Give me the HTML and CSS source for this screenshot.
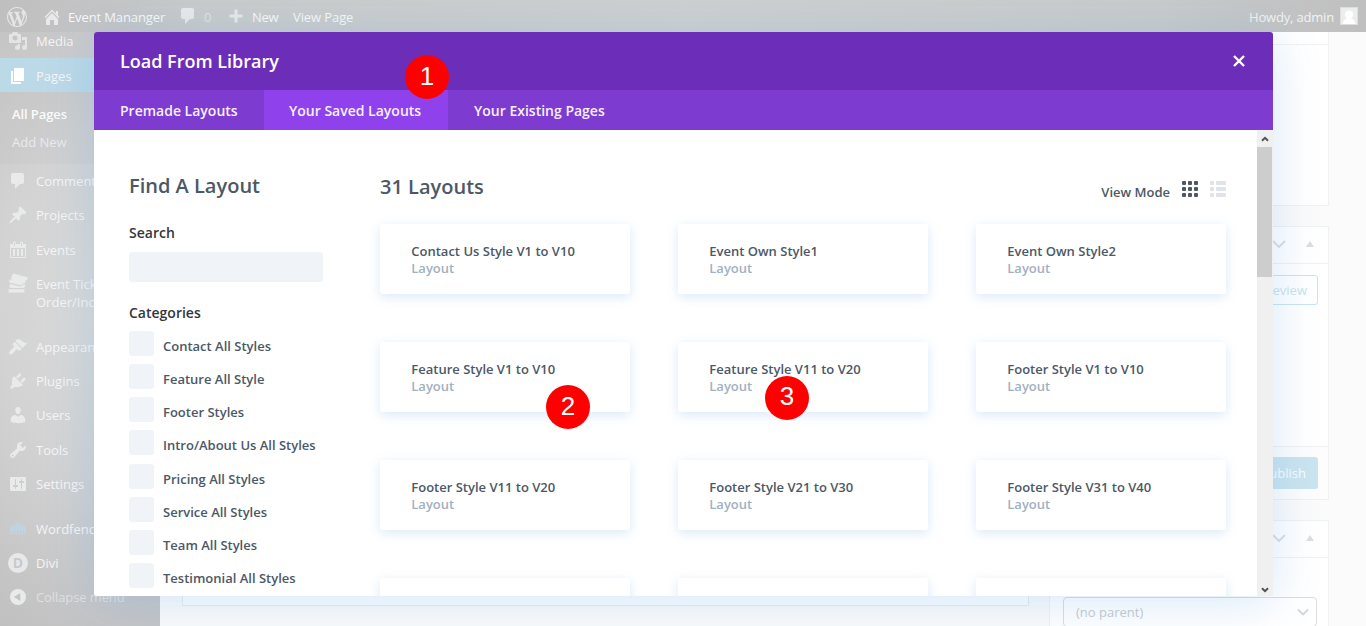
FILE: index.html
```
<!DOCTYPE html>
<html lang="en">
<head>
<meta charset="utf-8">
<title>Load From Library</title>
<link rel="stylesheet" href="styles.css">
</head>
<body>
<div class="screen">
  <header class="adminbar">
    <svg class="ic wp" viewBox="0 0 20 20"><path d="M20 10c0-5.51-4.49-10-10-10C4.48 0 0 4.49 0 10c0 5.52 4.48 10 10 10 5.51 0 10-4.48 10-10zM7.78 15.37L4.37 6.22c.55-.02 1.17-.08 1.17-.08.5-.06.44-1.13-.06-1.11 0 0-1.45.11-2.37.11-.18 0-.37 0-.58-.01C4.12 2.69 6.87 1.11 10 1.11c2.33 0 4.45.87 6.05 2.34-.68-.11-1.65.39-1.65 1.58 0 .74.45 1.36.9 2.1.35.61.55 1.36.55 2.46 0 1.49-1.4 5-1.4 5l-3.03-8.37c.54-.02.82-.17.82-.17.5-.05.44-1.25-.06-1.22 0 0-1.44.12-2.38.12-.87 0-2.33-.12-2.33-.12-.5-.03-.56 1.2-.06 1.22l.92.08 1.26 3.41zM17.41 10c.24-.64.74-1.87.43-4.25.7 1.29 1.05 2.71 1.05 4.25 0 3.29-1.73 6.24-4.4 7.78.97-2.59 1.94-5.2 2.92-7.78zM6.1 18.09C3.12 16.65 1.11 13.53 1.11 10c0-1.3.23-2.48.72-3.59C3.25 10.3 4.67 14.2 6.1 18.09zm4.03-6.63l2.58 6.98c-.86.29-1.76.45-2.71.45-.79 0-1.57-.11-2.29-.33.81-2.38 1.62-4.74 2.42-7.1z"/></svg>
    <svg class="ic home" viewBox="0 0 20 20"><path d="M16 8.5l1.53 1.53-1.06 1.06L10 4.620l-6.470 6.470-1.060-1.060L10 2.500l4 4V4h2v4.500zM10 6.040l6 5.990V18h-4v-5H8v5H4v-5.970z"/></svg>
    <span class="site">Event Mananger</span>
    <svg class="ic bubble" viewBox="0 0 20 20"><path d="M5 2h9c1.100 0 2 .9 2 2v7c0 1.100-.9 2-2 2h-2l-5 5v-5H5c-1.100 0-2-.9-2-2V4c0-1.100.9-2 2-2z"/></svg>
    <span class="count">0</span>
    <svg class="ic plus" viewBox="0 0 20 20"><path d="M8.500 3.500h3v5h5v3h-5v5h-3v-5h-5v-3h5z"/></svg>
    <span class="new">New</span>
    <span class="view">View Page</span>
    <span class="howdy">Howdy, admin</span>
    <svg class="avatar" viewBox="0 0 18 18"><rect class="frame" x=".5" y=".5" width="17" height="17"/><circle cx="9" cy="7.500" r="4"/><path d="M3 17c0-4 3-6 6-6s6 2 6 6z"/></svg>
  </header>

  <div class="body">
    <nav class="side">
      <div class="item media"><svg class="ic" viewBox="0 0 20 20"><path fill-rule="evenodd" d="M13 11V4c0-.55-.45-1-1-1h-1.670L9 1H5L3.670 3H2c-.55 0-1 .45-1 1v7c0 .55.45 1 1 1h10c.55 0 1-.45 1-1zM7 4.500a2.500 2.500 0 1 1 0 5 2.500 2.500 0 0 1 0-5zM14 6h5v10.500a2.500 2.500 0 1 1-2.500-2.500c.17 0 .34.02.5.05V9h-3V6zm-4 8.050V13h2v3.500A2.500 2.500 0 1 1 9.500 14c.17 0 .34.02.5.05z"/></svg><span>Media</span></div>
      <div class="item pages"><svg class="ic" viewBox="0 0 20 20"><path d="M6 15V2h10v13H6zm-1 1h8v2H3V5h2v11z"/></svg><span>Pages</span></div>
      <div class="sub"><span class="on">All Pages</span><span class="add">Add New</span></div>
      <div class="item"><svg class="ic" viewBox="0 0 20 20"><path d="M5 2h9c1.100 0 2 .9 2 2v7c0 1.100-.9 2-2 2h-2l-5 5v-5H5c-1.100 0-2-.9-2-2V4c0-1.100.9-2 2-2z"/></svg><span>Comments</span></div>
      <div class="item"><svg class="ic" viewBox="0 0 20 20"><path d="M10.440 3.020l1.820-1.820 6.360 6.350-1.830 1.820c-1.050-.68-2.480-.57-3.410.36l-.75.75c-.92.93-1.040 2.350-.35 3.410l-1.830 1.820-2.410-2.410-2.800 2.790c-.42.42-3.380 2.710-3.800 2.290s1.860-3.390 2.280-3.810l2.790-2.790L4.100 9.370l1.830-1.830c1.050.69 2.480.57 3.400-.36l.75-.74c.93-.93 1.050-2.360.36-3.420z"/></svg><span>Projects</span></div>
      <div class="item"><svg class="ic" viewBox="0 0 20 20"><path fill-rule="evenodd" d="M15 4h3v14H2V4h3V3c0-.83.67-1.500 1.500-1.500S8 2.170 8 3v1h4V3c0-.83.67-1.500 1.500-1.500S15 2.170 15 3v1zM6 3v2.500c0 .28.22.5.5.5s.5-.22.5-.5V3c0-.28-.22-.5-.5-.5S6 2.720 6 3zm7 0v2.500c0 .28.22.5.5.5s.5-.22.5-.5V3c0-.28-.22-.5-.5-.5s-.5.22-.5.5zm4 14V8H3v9h14zM7 16V9H5v7h2zm4 0V9H9v7h2zm4 0V9h-2v7h2z"/></svg><span>Events</span></div>
      <div class="item two"><svg class="ic" viewBox="0 0 20 20"><path d="M5 .5l15 4-1 2.500-1.500.5v2l-5 2.800L1 9.500l.5-2.500 3-1-1.500-1zM2.500 11l9.500 2.500 5-2.500v3l-2 1H3l-2-1.500zM0 16.200h17l-1 1.200.8 2H0l1-1.500z"/></svg><span>Event Tickets<br>Order/Income</span></div>
      <div class="item gap"><svg class="ic" viewBox="0 0 20 20"><path d="M14.480 11.060L7.410 3.990l1.500-1.500c.5-.56 2.300-.47 3.510.32 1.210.8 1.430 1.280 2.910 2.100 1.180.64 2.450 1.260 4.450.85zm-.71.71L6.700 4.700 4.930 6.470c-.39.39-.39 1.020 0 1.410l1.060 1.060c.39.39.39 1.030 0 1.420-.6.6-1.430 1.110-2.210 1.690-.35.26-.7.53-1.010.84C1.430 14.230.4 16.080 1.400 17.070c.99 1 2.840-.03 4.180-1.360.31-.31.58-.66.85-1.020.57-.78 1.080-1.610 1.690-2.210.39-.39 1.020-.39 1.410 0l1.060 1.060c.39.39 1.020.39 1.410 0z"/></svg><span>Appearance</span></div>
      <div class="item"><svg class="ic" viewBox="0 0 20 20"><path d="M13.110 4.360L9.870 7.600 8 5.730l3.240-3.240c.35-.34 1.050-.2 1.560.32.52.51.66 1.210.31 1.550zm-8 1.770l.91-1.120 9.010 9.010-1.190.84c-.71.71-2.630 1.160-3.820 1.160H6.140L4.900 17.260c-.59.59-1.540.59-2.120 0-.59-.58-.59-1.530 0-2.120l1.240-1.240v-3.880c0-1.130.4-3.190 1.090-3.890zm7.260 3.970l3.240-3.240c.34-.35 1.040-.21 1.550.31.52.51.66 1.210.31 1.550l-3.240 3.250z"/></svg><span>Plugins</span></div>
      <div class="item"><svg class="ic" viewBox="0 0 20 20"><path d="M10 9.250c-2.270 0-2.730-3.440-2.730-3.440C7 4.020 7.820 2 9.970 2c2.160 0 2.980 2.020 2.710 3.810 0 0-.41 3.440-2.680 3.440zm0 2.570L12.720 10c2.390 0 4.520 2.330 4.520 4.530v2.490s-3.650 1.130-7.240 1.130c-3.650 0-7.240-1.130-7.240-1.130v-2.490c0-2.250 1.940-4.480 4.470-4.480z"/></svg><span>Users</span></div>
      <div class="item"><svg class="ic" viewBox="0 0 20 20"><path d="M16.680 9.770c-1.340 1.340-3.300 1.670-4.950.99l-5.410 6.520c-.99.99-2.590.99-3.580 0s-.99-2.590 0-3.570l6.520-5.420c-.68-1.650-.35-3.610.99-4.950 1.280-1.280 3.120-1.620 4.720-1.060l-2.890 2.890 2.820 2.820 2.860-2.870c.53 1.580.18 3.390-1.080 4.650zM3.810 16.210c.4.39 1.040.39 1.430 0 .4-.4.4-1.040 0-1.430-.39-.4-1.030-.4-1.430 0-.39.39-.39 1.030 0 1.430z"/></svg><span>Tools</span></div>
      <div class="item"><svg class="ic" viewBox="0 0 20 20"><path fill-rule="evenodd" d="M18 16V4c0-.55-.45-1-1-1H3c-.55 0-1 .45-1 1v12c0 .55.45 1 1 1h14c.55 0 1-.45 1-1zM8 11h1c.55 0 1 .45 1 1s-.45 1-1 1H8v1.500c0 .28-.22.5-.5.5s-.5-.22-.5-.5V13H6c-.55 0-1-.45-1-1s.45-1 1-1h1V5.500c0-.28.22-.5.5-.5s.5.22.5.5V11zm5-2h-1c-.55 0-1-.45-1-1s.45-1 1-1h1V5.500c0-.28.22-.5.5-.5s.5.22.5.5V7h1c.55 0 1 .45 1 1s-.45 1-1 1h-1v5.500c0 .28-.22.5-.5.5s-.5-.22-.5-.5V9z"/></svg><span>Settings</span></div>
      <div class="item gap"><svg class="ic fence" viewBox="0 0 20 20"><path d="M2 8l1-1.500L4 8h.8V6l1-1.500 1 1.500v1h.8V5C8.500 4 9 3.500 10 3s1.500 1 2.400 2v2h.8V6l1-1.500 1 1.500v2h.8l1-1.500L18 8v7.500h-2V12h-1v3.500h-1.500V12h-1v3.500h-1.700V11H9.200v4.500H7.500V12h-1v3.500H5V12H4v3.500H2z"/></svg><span>Wordfence</span></div>
      <div class="item"><span class="divi">D</span><span>Divi</span></div>
      <div class="item collapse"><svg class="ic" viewBox="0 0 20 20"><path fill-rule="evenodd" d="M10 2a8 8 0 1 1 0 16 8 8 0 0 1 0-16zm2.300 4L6 10l6.300 4z"/></svg><span>Collapse menu</span></div>
    </nav>
    <main class="editor"><div class="builder"></div></main>
    <aside class="meta">
      <section class="box first"><div class="strip"></div></section>
      <section class="box publish">
        <div class="head"><svg viewBox="0 0 14 8"><path d="M1 1l6 6 6-6"/></svg><i class="tri"></i></div>
        <div class="mid"><span class="preview">Preview</span></div>
        <div class="foot"><span class="pub">Publish</span></div>
      </section>
      <section class="box attrs">
        <div class="head"><svg viewBox="0 0 14 8"><path d="M1 1l6 6 6-6"/></svg><i class="tri"></i></div>
        <div class="select"><span>(no parent)</span><svg viewBox="0 0 14 8"><path d="M2 1.500l5 5 5-5"/></svg></div>
      </section>
    </aside>
  </div>

  <div class="modal">
    <div class="title"><span>Load From Library</span><svg viewBox="0 0 12 12"><path d="M1 1l10 10M11 1L1 11"/></svg></div>
    <div class="tabs"><span>Premade Layouts</span><span class="active">Your Saved Layouts</span><span>Your Existing Pages</span></div>
    <div class="content">
      <div class="filter">
        <h2>Find A Layout</h2>
        <h3>Search</h3>
        <div class="input"></div>
        <h3 class="cat">Categories</h3>
        <div class="checks">
          <label><i></i><span>Contact All Styles</span></label>
          <label><i></i><span>Feature All Style</span></label>
          <label><i></i><span>Footer Styles</span></label>
          <label><i></i><span>Intro/About Us All Styles</span></label>
          <label><i></i><span>Pricing All Styles</span></label>
          <label><i></i><span>Service All Styles</span></label>
          <label><i></i><span>Team All Styles</span></label>
          <label><i></i><span>Testimonial All Styles</span></label>
        </div>
      </div>
      <div class="results">
        <div class="bar"><h2>31 Layouts</h2><span class="mode">View Mode</span>
          <svg class="grid" viewBox="0 0 16 16"><g><rect width="4" height="4" rx="1"/><rect x="6" width="4" height="4" rx="1"/><rect x="12" width="4" height="4" rx="1"/><rect y="6" width="4" height="4" rx="1"/><rect x="6" y="6" width="4" height="4" rx="1"/><rect x="12" y="6" width="4" height="4" rx="1"/><rect y="12" width="4" height="4" rx="1"/><rect x="6" y="12" width="4" height="4" rx="1"/><rect x="12" y="12" width="4" height="4" rx="1"/></g></svg>
          <svg class="list" viewBox="0 0 16 16"><rect width="4" height="4" rx="1"/><rect x="6" width="10" height="4" rx="1"/><rect y="6" width="4" height="4" rx="1"/><rect x="6" y="6" width="10" height="4" rx="1"/><rect y="12" width="4" height="4" rx="1"/><rect x="6" y="12" width="10" height="4" rx="1"/></svg>
        </div>
        <div class="cards">
          <div class="card"><b>Contact Us Style V1 to V10</b><span>Layout</span></div>
          <div class="card"><b>Event Own Style1</b><span>Layout</span></div>
          <div class="card"><b>Event Own Style2</b><span>Layout</span></div>
          <div class="card"><b>Feature Style V1 to V10</b><span>Layout</span></div>
          <div class="card"><b>Feature Style V11 to V20</b><span>Layout</span></div>
          <div class="card"><b>Footer Style V1 to V10</b><span>Layout</span></div>
          <div class="card"><b>Footer Style V11 to V20</b><span>Layout</span></div>
          <div class="card"><b>Footer Style V21 to V30</b><span>Layout</span></div>
          <div class="card"><b>Footer Style V31 to V40</b><span>Layout</span></div>
          <div class="card"></div><div class="card"></div><div class="card"></div>
        </div>
      </div>
      <div class="scroll">
        <svg viewBox="0 0 8 6"><path d="M1 4.800l3-3 3 3"/></svg>
        <div class="thumb"></div>
        <svg class="down" viewBox="0 0 8 6"><path d="M1 1.200l3 3 3-3"/></svg>
      </div>
    </div>
  </div>
  <div class="pin one">1</div>
  <div class="pin twop">2</div>
  <div class="pin three">3</div>
</div>
</body>
</html>
```
FILE: styles.css
```
* { box-sizing: border-box; }
body { margin: 0; font-family: "Open Sans", "Noto Sans", sans-serif; font-size: 13px; }
h2, h3 { margin: 0; font-weight: 600; }
.screen { position: relative; width: 1366px; height: 626px; overflow: hidden; background: #fbfbfb; }
.ic { width: 20px; height: 20px; fill: currentColor; flex: none; }

.adminbar { height: 32px; display: flex; align-items: center; color: #f9f9f9; padding: 2px 8px 0 7px; white-space: nowrap;
  background: linear-gradient(90deg, #bfbfc0, #cacbcb 15%, #cfd0d1 50%, #cacbcb 85%, #bfbfc0); }
.adminbar .wp { color: #e6e6e7; }
.adminbar .home { color: #e9e9ea; margin: -1px 6px 0 15px; }
.adminbar .bubble { width: 20px; color: #e9e9ea; margin: -2px 0 0 15px; }
.site { width: 95px; letter-spacing: -.12px; }
.count { color: #e2e3e4; margin-left: 6px; width: 7px; }
.adminbar .plus { color: #e9e9ea; margin: -2px 6px 0 15px; }
.new { width: 27px; letter-spacing: -.3px; }
.view { margin-left: 14px; letter-spacing: -.1px; }
.howdy { margin-left: auto; color: #f2f3f3; letter-spacing: -.18px; }
.avatar { width: 18px; height: 18px; margin: -2px 0 0 6px; fill: #fff; }
.avatar .frame { fill: #eceeed; stroke: #dededd; }

.body { height: 594px; display: flex; }
.side { width: 160px; flex: none; overflow: hidden; color: #f5f5f5;
  background: radial-gradient(ellipse 240px 330px at 130px 270px, #dcdddb, #d3d3d4 55%, #bfbfc0 115%); }
.item { height: 34.3px; display: flex; align-items: center; padding-left: 8px; white-space: nowrap; line-height: 18px; }
.item > span:last-child { margin-left: 8px; }
.item .ic { color: #e9eaea; }
.media { height: 26px; padding-bottom: 8px; }
.item.media .ic { color: #e4e4e5; }
.pages { height: 34px; padding-top: 1px; background: #bcd9e7; }
.item.pages .ic { color: #fff; }
.sub { height: 72px; display: flex; flex-direction: column; gap: 10px; padding: 13px 12px; line-height: 18px; background: rgba(150,150,155,.06); }
.sub .on { font-weight: 600; color: #fbfbfb; letter-spacing: -.1px; }
.sub .add { color: #eaeaeb; }
.two { height: 52px; align-items: flex-start; padding-top: 8px; }
.two .ic { margin-top: -2px; }
.gap { margin-top: 10.8px; }
.item .fence { color: #c0d3de; }
.divi { width: 20px; height: 20px; border-radius: 50%; background: #e8e8e9; color: #c9c9ca; font-weight: 700; font-size: 14px; line-height: 20px; text-align: center; }
.collapse { color: #dfe0e1; height: 33px; letter-spacing: -.1px; }

.editor { width: 869px; padding-left: 22px; flex: none; }
.builder { height: 574px; border: 1px solid #e8ecef; background: #fdfeff; }
.meta { width: 280px; margin-left: 20px; flex: none; }
.box { background: #fff; border: 1px solid #f0f1f2; margin-bottom: 20px; }
.first { height: 174px; border-top: 0; }
.strip { height: 13px; border-bottom: 1px solid #f1f1f2; }
.publish { height: 274px; display: flex; flex-direction: column; }
.head { height: 37px; flex: none; border-bottom: 1px solid #f1f1f2; display: flex; align-items: center; justify-content: flex-end; padding: 0 14px 2px 0; }
.head svg { width: 14px; height: 8px; fill: none; stroke: #dddfe1; stroke-width: 2; margin-right: 20px; }
.tri { border: 4px solid transparent; border-top: 0; border-bottom: 6px solid #dddee0; }
.mid { flex: 1; padding: 11px 10px; display: flex; justify-content: flex-end; align-items: flex-start; }
.preview { border: 1px solid #cbe4ef; border-radius: 3px; height: 30px; line-height: 28px; padding: 0 10px; color: #cbe4ef; }
.foot { height: 53px; border-top: 1px solid #f1f1f2; background: #fdfdfd; display: flex; justify-content: flex-end; padding: 10px; }
.pub { height: 32px; line-height: 32px; background: #cbe4ef; color: #fbfdfe; border-radius: 3px; padding: 0 12px; }
.attrs { height: 160px; }
.select { margin: 39px 11px 0 13px; height: 30px; border: 1px solid #dcdddf; border-radius: 4px; display: flex; align-items: center; justify-content: space-between; padding: 0 6px 0 12px; color: #c8cbcf; font-size: 13px; }
.select svg { width: 14px; height: 8px; fill: none; stroke: #d5d7d9; stroke-width: 1.8; }

.modal { position: absolute; left: 94px; top: 32px; width: 1179px; height: 564px; border-radius: 3px; background: #fff;
  font-weight: 600; color: #4c5866; box-shadow: 0 5px 50px rgba(43,135,218,.2); }
.title { height: 58px; padding: 0 28px 0 26px; display: flex; align-items: center; justify-content: space-between; background: #6c2eb9; color: #fff; font-size: 18px; border-radius: 3px 3px 0 0; }
.title svg { width: 12px; height: 12px; fill: none; stroke: #fff; stroke-width: 2.4; }
.tabs { height: 40px; background: #7e3bd0; display: flex; color: #f7f0ff; font-size: 14px; line-height: 41px; }
.tabs span { padding-left: 26px; width: 170px; white-space: nowrap; }
.tabs .active { width: 184px; padding-left: 25px; background: #8f42ec; }
.content { height: 466px; display: flex; overflow: hidden; }
.filter { width: 194px; margin-left: 35px; padding-top: 42px; flex: none; }
h2 { font-size: 20px; line-height: 28px; }
h3 { font-size: 14px; line-height: 20px; color: #32373c; margin-top: 23px; }
.input { height: 30px; margin-top: 9px; border-radius: 3px; background: #f0f4f9; }
.cat { margin-top: 21px; }
.checks { margin-top: 8px; }
.checks label { display: flex; height: 33.15px; font-size: 13px; line-height: 30px; white-space: nowrap; }
.checks i { width: 25px; height: 25px; margin-right: 9px; border-radius: 3px; background: #f0f4f9; }
.results { width: 846px; margin-left: 57px; padding-top: 43px; flex: none; }
.bar { display: flex; height: 51px; align-items: flex-start; }
.bar h2 { flex: 1; }
.mode { font-size: 13px; line-height: 18px; margin-top: 10px; }
.bar svg { width: 16px; height: 16px; margin-top: 8px; margin-left: 12px; fill: #4c5866; }
.bar .list { fill: #e0e3e9; }
.cards { display: grid; grid-template-columns: repeat(3, 250px); gap: 48px; grid-auto-rows: 70px; }
.card { border-radius: 3px; background: #fff; box-shadow: 0 3px 12px rgba(43,135,218,.18); padding: 19px 31.300px; display: flex; flex-direction: column; font-size: 13px; line-height: 17px; white-space: nowrap; }
.card b { font-weight: 600; }
.card span { color: #a2b0c1; }
.scroll { width: 16px; margin-left: auto; background: #f0f0f0; display: flex; flex-direction: column; align-items: center; }
.scroll svg { width: 8px; height: 6px; margin: 6px 0 5px; fill: none; stroke: #505356; stroke-width: 2; }
.thumb { width: 15px; height: 130px; margin-right: 1px; background: #cdcdcd; }
.scroll .down { margin-top: auto; margin-bottom: 3px; }
.pin { position: absolute; width: 44px; height: 44px; border-radius: 50%; background: #f00; color: #fff; font: 26px/42px "Liberation Sans", sans-serif; text-align: center; }
.one { left: 405px; top: 55px; }
.twop { left: 546px; top: 385px; }
.three { left: 765px; top: 376px; line-height: 41px; }
```
